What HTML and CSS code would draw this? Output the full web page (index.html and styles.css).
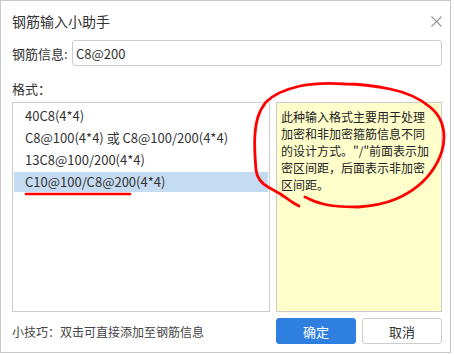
FILE: index.html
```html
<!DOCTYPE html>
<html lang="zh-CN">
<head>
    <meta charset="UTF-8">
    <title>钢筋输入小助手</title>
    <link rel="stylesheet" href="styles.css">
</head>
<body>
    <div class="dialog">
        <div class="header">
            <span class="title">钢筋输入小助手</span>
            <svg class="close" width="11" height="11" viewBox="0 0 11 11">
                <path d="M0.5 0.5L10.5 10.5M10.5 0.5L0.5 10.5" stroke="#9a9a9a" stroke-width="1.2" fill="none"/>
            </svg>
        </div>
        <div class="info-row">
            <label>钢筋信息:</label>
            <input type="text" value="C8@200">
        </div>
        <div class="format-label">格式：</div>
        <div class="main">
            <ul class="format-list">
                <li>40C8(4*4)</li>
                <li>C8@100(4*4) 或 C8@100/200(4*4)</li>
                <li>13C8@100/200(4*4)</li>
                <li class="selected">C10@100/C8@200(4*4)</li>
            </ul>
            <div class="tip-box">此种输入格式主要用于处理<br>加密和非加密箍筋信息不同<br>的设计方式。"/"前面表示加<br>密区间距，后面表示非加密<br>区间距。</div>
        </div>
        <div class="footer">
            <span class="hint">小技巧：双击可直接添加至钢筋信息</span>
            <div class="buttons">
                <button class="btn ok">确定</button>
                <button class="btn cancel">取消</button>
            </div>
        </div>
        <!-- hand-drawn marks on top of the dialog -->
        <svg class="marks" width="451" height="353" viewBox="0 0 451 353">
            <path d="M305 197 C310 199 314 202 320 203 C332 207 345 207 358 207 C372 206 384 204 396 199 C410 193 425 182 434 168 C441 157 444 147 444 137 C444 125 440 115 430 107 C418 97 405 92 390 89 C375 86 360 84 345 84 C330 83 315 83 300 86 C287 89 275 93 266 102 C258 112 256 122 255 134 C254 146 255 158 256 170 C257 178 261 183 268 187 C276 191 284 196 292 202 C295 204 297 205 299 206"
                  stroke="#ff0000" stroke-width="2.8" fill="none" stroke-linecap="round" stroke-linejoin="round"/>
            <path d="M26 194 L130 194" stroke="#ff0000" stroke-width="2.6" stroke-linecap="round"/>
        </svg>
    </div>
</body>
</html>
```

FILE: styles.css
```css
*{
    margin: 0;
    padding: 0;
    box-sizing: border-box;
    font-family: "Noto Sans CJK SC", sans-serif;
}
body{
    background: #fff;
}
.dialog{
    position: relative;
    width: 451px;
    height: 353px;
    border: 1px solid #c8c8c8;
    padding: 0 8px 0 11px;
    color: #333;
}
.header{
    height: 39px;
    display: flex;
    align-items: center;
    justify-content: space-between;
}
.header .title{
    font-size: 14px;
    color: #333;
}
.header .close{
    margin-right: 0;
    margin-top: 1px;
}
.info-row{
    display: flex;
    align-items: center;
    height: 26px;
}
.info-row label{
    font-size: 13px;
    width: 60px;
}
.info-row input{
    flex: 1;
    height: 26px;
    border: 1px solid #cccccc;
    border-radius: 3px;
    padding: 0 3px;
    font-size: 13px;
    color: #333;
    outline: none;
}
.format-label{
    font-size: 13px;
    height: 36px;
    line-height: 16px;
    padding-top: 15px;
}
.main{
    display: grid;
    grid-template-columns: 258px 166px;
    gap: 6px;
    height: 210px;
}
.format-list{
    list-style: none;
    border: 1px solid #cccccc;
    padding: 1px 1px 0 1px;
}
.format-list li{
    height: 20px;
    line-height: 20px;
    margin-top: 2px;
    padding-left: 11px;
    font-size: 13px;
    color: #333;
    white-space: nowrap;
}
.format-list li.selected{
    background: #c5dbf1;
}
.tip-box{
    background: #ffffcc;
    border: 1px solid #cccccc;
    padding: 5px 4px;
    font-size: 12px;
    line-height: 17px;
    color: #222;
}
.footer{
    display: grid;
    grid-template-columns: 258px 166px;
    gap: 6px;
    margin-top: 6px;
    align-items: center;
}
.hint{
    font-size: 12px;
    color: #444;
    padding-top: 1px;
}
.buttons{
    display: flex;
    gap: 6px;
}
.btn{
    width: 80px;
    height: 26px;
    border-radius: 3px;
    font-size: 13px;
    cursor: pointer;
    outline: none;
}
.btn.ok{
    background: #2e7fdf;
    border: 1px solid #2e7fdf;
    color: #fff;
}
.btn.cancel{
    background: #fff;
    border: 1px solid #cccccc;
    color: #333;
}
.marks{
    position: absolute;
    left: -1px;
    top: -1px;
    pointer-events: none;
}
```
